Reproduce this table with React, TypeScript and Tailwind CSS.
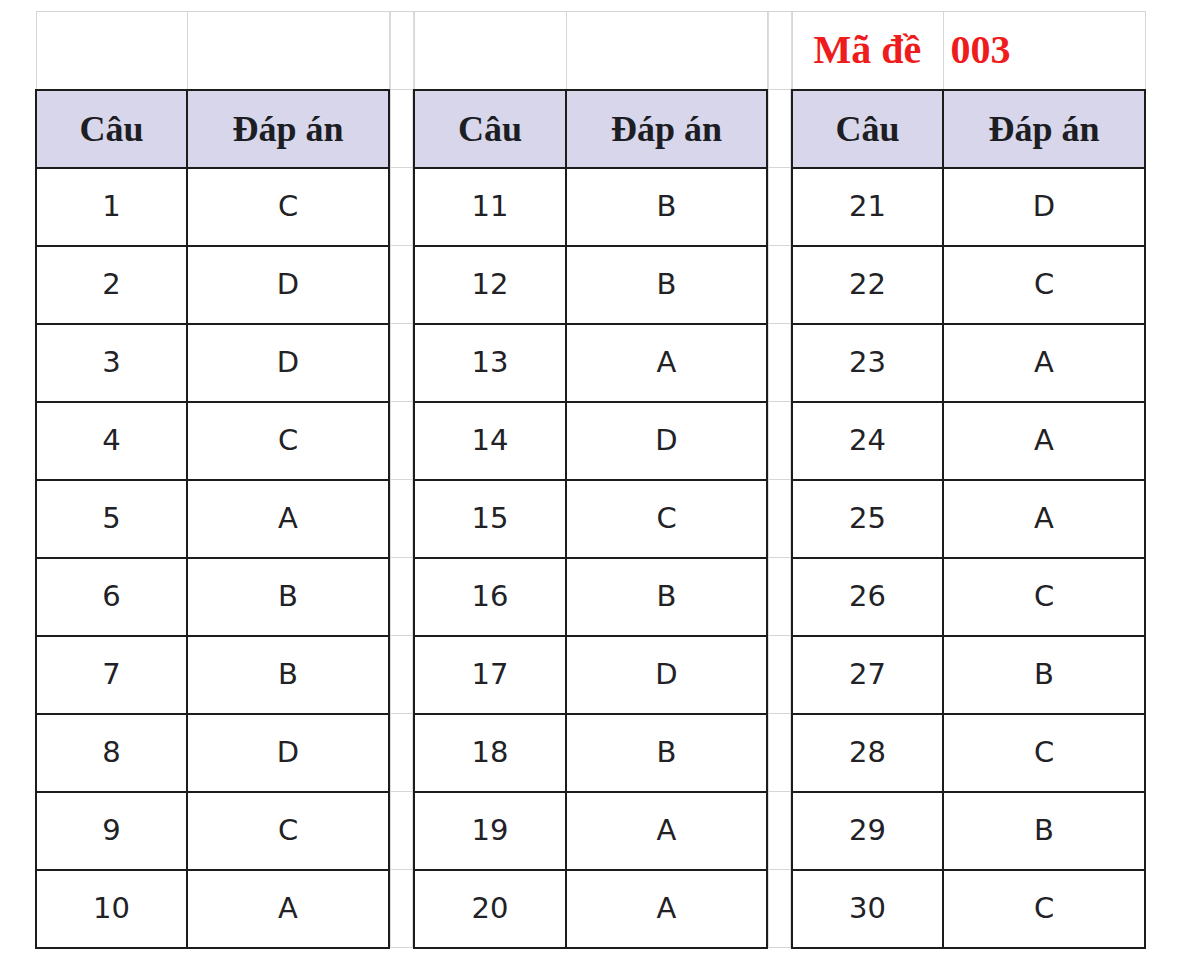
import React from "react";

const answers: string[][] = [
  ["C", "D", "D", "C", "A", "B", "B", "D", "C", "A"],
  ["B", "B", "A", "D", "C", "B", "D", "B", "A", "A"],
  ["D", "C", "A", "A", "A", "C", "B", "C", "B", "C"],
];

const grid = "border border-[#d6d6d6]";
const boxed = "border-2 border-[#1c1c1c]";
const gap = `${grid} shadow-[inset_1px_0_0_#dcdcdc,inset_-1px_0_0_#dcdcdc]`;
const head =
  "text-[36px] font-bold text-[#1d1d24] text-center bg-[#d8d6ea] [font-family:'Liberation_Serif',serif]";
const body = "text-[29px] text-[#222226] text-center [font-family:'DejaVu_Sans',sans-serif]";

export default function App() {
  return (
    <div className="bg-white w-[1200px] h-[960px] pt-[11px] pl-[35px]">
      <table className="table-fixed border-collapse">
        <colgroup>
          <col className="w-[151px]" />
          <col className="w-[202px]" />
          <col className="w-[25px]" />
          <col className="w-[152px]" />
          <col className="w-[201px]" />
          <col className="w-[25px]" />
          <col className="w-[151px]" />
          <col className="w-[202px]" />
        </colgroup>
        <tbody>
          <tr className="h-[78px]">
            <td className={grid} />
            <td className={grid} />
            <td className={gap} />
            <td className={grid} />
            <td className={grid} />
            <td className={gap} />
            <td className={`${grid} text-center text-[40px] font-bold text-[#ee1c1c] [font-family:'Liberation_Serif',serif]`}>
              Mã đề
            </td>
            <td className={`${grid} pl-[7px] text-[40px] font-bold text-[#ee1c1c] [font-family:'Liberation_Serif',serif]`}>
              003
            </td>
          </tr>
          <tr className="h-[78px]">
            {answers.map((_, b) => (
              <React.Fragment key={b}>
                <td className={`${boxed} ${head}`}>Câu</td>
                <td className={`${boxed} ${head}`}>Đáp án</td>
                {b < 2 && <td className={gap} />}
              </React.Fragment>
            ))}
          </tr>
          {answers[0].map((_, r) => (
            <tr key={r} className="h-[78px]">
              {answers.map((col, b) => (
                <React.Fragment key={b}>
                  <td className={`${boxed} ${body}`}>{b * 10 + r + 1}</td>
                  <td className={`${boxed} ${body}`}>{col[r]}</td>
                  {b < 2 && <td className={gap} />}
                </React.Fragment>
              ))}
            </tr>
          ))}
        </tbody>
      </table>
    </div>
  );
}
